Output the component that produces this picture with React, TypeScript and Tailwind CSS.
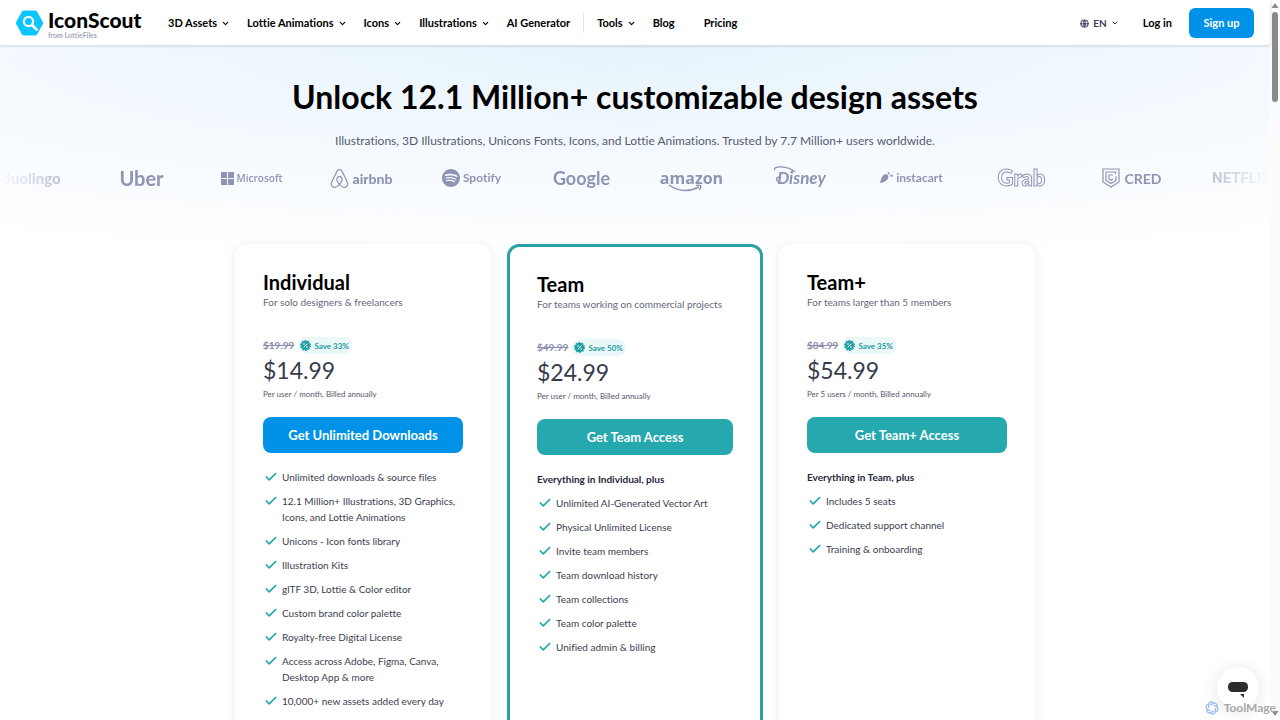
import type { ReactNode } from "react";
import { Check, ChevronDown } from "lucide-react";
import { FaGlobe } from "react-icons/fa";
import { RiOpenaiLine } from "react-icons/ri";
import { SiAirbnb, SiSpotify } from "react-icons/si";

interface NavItem {
  label: string;
  menu?: boolean;
}

interface Plan {
  name: string;
  tagline: string;
  oldPrice: string;
  save: string;
  price: string;
  billing: string;
  cta: string;
  intro?: string;
  features: string[];
  featured?: boolean;
  primary?: boolean;
}

const productNav: NavItem[] = [
  { label: "3D Assets", menu: true },
  { label: "Lottie Animations", menu: true },
  { label: "Icons", menu: true },
  { label: "Illustrations", menu: true },
  { label: "AI Generator" },
];

const plans: Plan[] = [
  {
    name: "Individual",
    tagline: "For solo designers & freelancers",
    oldPrice: "$19.99",
    save: "Save 33%",
    price: "$14.99",
    billing: "Per user / month, Billed annually",
    cta: "Get Unlimited Downloads",
    primary: true,
    features: [
      "Unlimited downloads & source files",
      "12.1 Million+ Illustrations, 3D Graphics, Icons, and Lottie Animations",
      "Unicons - Icon fonts library",
      "Illustration Kits",
      "glTF 3D, Lottie & Color editor",
      "Custom brand color palette",
      "Royalty-free Digital License",
      "Access across Adobe, Figma, Canva, Desktop App & more",
      "10,000+ new assets added every day",
    ],
  },
  {
    name: "Team",
    tagline: "For teams working on commercial projects",
    oldPrice: "$49.99",
    save: "Save 50%",
    price: "$24.99",
    billing: "Per user / month, Billed annually",
    cta: "Get Team Access",
    intro: "Everything in Individual, plus",
    featured: true,
    features: [
      "Unlimited AI-Generated Vector Art",
      "Physical Unlimited License",
      "Invite team members",
      "Team download history",
      "Team collections",
      "Team color palette",
      "Unified admin & billing",
    ],
  },
  {
    name: "Team+",
    tagline: "For teams larger than 5 members",
    oldPrice: "$84.99",
    save: "Save 35%",
    price: "$54.99",
    billing: "Per 5 users / month, Billed annually",
    cta: "Get Team+ Access",
    intro: "Everything in Team, plus",
    features: ["Includes 5 seats", "Dedicated support channel", "Training & onboarding"],
  },
];

function NavLink({ label, menu }: NavItem) {
  if (menu) {
    return (
      <button type="button" className="flex items-center gap-1">
        {label}
        <ChevronDown size={9} strokeWidth={3} />
      </button>
    );
  }
  return <a href="#">{label}</a>;
}

function Logo() {
  return (
    <a href="#" className="flex w-38 items-center gap-1">
      <svg width="28" height="28" viewBox="0 0 28 28" aria-hidden="true">
        <path
          d="M8 4h11L24.500 14 19 24H8L2.500 14z"
          fill="#0bc5ff"
          stroke="#0bc5ff"
          strokeWidth="5"
          strokeLinejoin="round"
        />
        <circle cx="12.500" cy="12.500" r="4.600" fill="none" stroke="#fff" strokeWidth="2.200" />
        <path d="M16 16l4.500 4.500" stroke="#fff" strokeWidth="2.600" strokeLinecap="round" />
      </svg>
      <span className="flex flex-col">
        <span className="text-[21px] leading-6 font-black">IconScout</span>
        <span className="text-[7px] leading-[6px] text-[#a3a6b8]">from LottieFiles</span>
      </span>
    </a>
  );
}

function Header() {
  return (
    <header className="relative z-10 flex h-[45px] items-center bg-white px-4 pt-px text-[11px] font-bold shadow-[0_1px_3px_rgba(40,60,80,0.2)]">
      <Logo />
      <nav className="flex items-center gap-[17px]">
        {productNav.map((item) => (
          <NavLink key={item.label} {...item} />
        ))}
        <span className="-mx-1 h-5 w-px bg-gray-200" />
        <NavLink label="Tools" menu />
        <NavLink label="Blog" />
        <span className="ml-3">
          <NavLink label="Pricing" />
        </span>
      </nav>
      <div className="ml-auto flex items-center">
        <button type="button" className="flex items-center gap-1 text-[10px] text-[#3b3e55]">
          <FaGlobe size={9} />
          EN
          <ChevronDown size={8} strokeWidth={3} />
        </button>
        <a href="#" className="ml-6">
          Log in
        </a>
        <button type="button" className="ml-[17px] h-[30px] w-[65px] rounded-md bg-[#0092e8] text-white">
          Sign up
        </button>
      </div>
    </header>
  );
}

function Brand({ children }: { children: ReactNode }) {
  return (
    <li className="flex h-7 w-[110px] shrink-0 items-center justify-center gap-[3px] whitespace-nowrap">
      {children}
    </li>
  );
}

function Brands() {
  return (
    <ul className="mt-[13px] flex justify-center overflow-hidden pl-[3px] text-[#8f93b4] [mask-image:linear-gradient(to_right,transparent,black_110px,black_calc(100%_-_110px),transparent)]">
      <Brand>
        <span className="text-[15px] font-black">duolingo</span>
      </Brand>
      <Brand>
        <span className="text-[20px] leading-7 font-bold">Uber</span>
      </Brand>
      <Brand>
        <svg width="13" height="13" viewBox="0 0 13 13" fill="currentColor" aria-hidden="true">
          <path d="M0 0h6v6H0zM7 0h6v6H7zM0 7h6v6H0zM7 7h6v6H7z" />
        </svg>
        <span className="font-['Open_Sans',sans-serif] text-[10px] font-semibold">Microsoft</span>
      </Brand>
      <Brand>
        <SiAirbnb size={19} />
        <span className="text-[14px] font-black">airbnb</span>
      </Brand>
      <Brand>
        <SiSpotify size={18} />
        <span className="text-[12px] font-bold">Spotify</span>
      </Brand>
      <Brand>
        <span className="text-[18px] font-bold">Google</span>
      </Brand>
      <Brand>
        <span className="relative font-['Open_Sans',sans-serif] text-[16px] leading-5 font-bold">
          amazon
          <svg
            className="absolute top-4 left-2"
            width="36"
            height="8"
            viewBox="0 0 36 8"
            fill="none"
            stroke="currentColor"
            strokeWidth="1.500"
            aria-hidden="true"
          >
            <path d="M1 1c9 6.500 20 7 30 2M28 1.500c5-1 6-.5 3.500 4.500" />
          </svg>
        </span>
      </Brand>
      <Brand>
        <span className="relative text-[17px] font-bold italic">
          <svg
            className="absolute top-0 -left-1"
            width="28"
            height="20"
            viewBox="0 0 28 20"
            fill="none"
            stroke="currentColor"
            strokeWidth="1.300"
            aria-hidden="true"
          >
            <path d="M2 5C-1 1 14 0 22 7M8 12c-6 0-6 4 0 6" />
          </svg>
          Disney
        </span>
      </Brand>
      <Brand>
        <svg width="13" height="12" viewBox="0 0 13 12" fill="currentColor" aria-hidden="true">
          <path d="M0 11C1 6 3 2 6 2c3 1 3 4 1 6-2 2-5 3-7 3zM8 0c2 0 2 2 1 3-1-1-2-2-1-3zM10 4c1-2 3-1 3 0-1 1-2 1-3 0z" />
        </svg>
        <span className="text-[12px] font-bold">instacart</span>
      </Brand>
      <Brand>
        <span className="text-[22px] leading-7 font-black text-transparent [-webkit-text-stroke:1px_#8f93b4]">
          Grab
        </span>
      </Brand>
      <Brand>
        <svg
          width="18"
          height="20"
          viewBox="0 0 18 20"
          fill="none"
          stroke="currentColor"
          strokeWidth="1.200"
          aria-hidden="true"
        >
          <path d="M1 1h16v13l-8 5-8-5zM13.500 6V4H4v8.500l5 3 5-3V8.500M11 7H7v4l2 1.200 2-1.200" />
        </svg>
        <span className="ml-0.5 text-[14px] font-bold">CRED</span>
      </Brand>
      <Brand>
        <span className="font-['Roboto',sans-serif] text-[15px] font-bold">NETFLIX</span>
      </Brand>
    </ul>
  );
}

function SaveBadge({ label }: { label: string }) {
  return (
    <span className="flex h-[17px] items-center gap-[3px] rounded-full bg-[#eaf8f9] px-0.5 pr-[3px] text-[8px] font-bold text-[#24989d]">
      <svg width="11" height="11" viewBox="0 0 22 22" aria-hidden="true">
        <circle cx="11" cy="11" r="9.500" fill="#21a0a5" />
        <circle
          cx="11"
          cy="11"
          r="9.500"
          fill="none"
          stroke="#21a0a5"
          strokeWidth="3"
          strokeDasharray="3 3"
        />
        <path d="M8 14l6-6" stroke="#fff" strokeWidth="2" strokeLinecap="round" />
        <circle cx="8" cy="8" r="1.600" fill="#fff" />
        <circle cx="14" cy="14" r="1.600" fill="#fff" />
      </svg>
      {label}
    </span>
  );
}

function PlanCard({ plan }: { plan: Plan }) {
  return (
    <article
      className={
        plan.featured
          ? "rounded-xl border-3 border-[#2ba1a6] bg-white p-[27px] pt-[25px]"
          : "rounded-xl bg-white p-7 pt-[26px] shadow-[0_1px_10px_rgba(40,60,80,0.09)]"
      }
    >
      <h2 className="text-[20px] leading-6 font-bold text-black">{plan.name}</h2>
      <p className="text-[10px] leading-4 whitespace-nowrap text-[#65687c]">{plan.tagline}</p>
      <div className="mt-[27px] flex items-center gap-1">
        <s className="text-[10px] font-bold text-[#8a8dac]">{plan.oldPrice}</s>
        <SaveBadge label={plan.save} />
      </div>
      <p className="text-[23px] leading-8 text-[#373a4b]">{plan.price}</p>
      <p className="text-[8px] leading-4 text-[#55586b]">{plan.billing}</p>
      <button
        type="button"
        className={`mt-[15px] h-9 w-full rounded-lg pt-px text-[13px] font-bold text-white ${
          plan.primary ? "bg-[#0092e8]" : "bg-[#25a8ae]"
        }`}
      >
        {plan.cta}
      </button>
      {plan.intro && (
        <p className="mt-4 -mb-2 text-[10px] leading-4 font-bold text-[#26283a]">{plan.intro}</p>
      )}
      <ul className="mt-4 flex flex-col gap-2 text-[10px] leading-4 text-[#3b3e50]">
        {plan.features.map((feature) => (
          <li key={feature} className="flex items-start gap-1 pl-px">
            <Check size={14} strokeWidth={3} className="mt-px shrink-0 text-[#25a8ae]" />
            {feature}
          </li>
        ))}
      </ul>
    </article>
  );
}

function ScrollBar() {
  return (
    <div className="flex w-2.5 shrink-0 flex-col items-center bg-[#fcfcfc] py-[3px] text-[#8b8b8b]">
      <svg width="8" height="6" viewBox="0 0 8 6" fill="currentColor" aria-hidden="true">
        <path d="M4 0l3.500 5h-7z" />
      </svg>
      <span className="mt-[3px] h-[90px] w-1.5 rounded-full bg-[#8b8b8b]" />
      <svg className="mt-auto" width="8" height="6" viewBox="0 0 8 6" fill="currentColor" aria-hidden="true">
        <path d="M4 5L.5 0h7z" />
      </svg>
    </div>
  );
}

function ChatButton() {
  return (
    <button
      type="button"
      aria-label="Open chat"
      className="absolute right-[21px] bottom-[11px] flex size-[42px] items-center justify-center rounded-full bg-white pt-1 shadow-[0_2px_16px_rgba(40,60,80,0.14)]"
    >
      <svg width="20" height="17" viewBox="0 0 20 17" fill="#2d2d2d" aria-hidden="true">
        <rect width="20" height="10" rx="4.500" />
        <path d="M12 12h4v4z" />
      </svg>
    </button>
  );
}

export default function App() {
  return (
    <div className="relative flex h-screen overflow-hidden bg-white font-['Lato','Open_Sans',sans-serif] text-black [font-variant-ligatures:none]">
      <div className="min-w-0 flex-1">
        <Header />
        <main className="bg-[radial-gradient(ellipse_100%_220px_at_50%_0,#e6f3fb,#f5faff_55%,#ffffff)]">
          <section className="pt-8 text-center">
            <h1 className="text-[32px] leading-10 font-bold">
              Unlock 12.1 Million+ customizable design assets
            </h1>
            <p className="mt-[14px] text-[12px] leading-5 text-[#565a70]">
              Illustrations, 3D Illustrations, Unicons Fonts, Icons, and Lottie Animations. Trusted by
              7.7 Million+ users worldwide.
            </p>
            <Brands />
          </section>
          <section className="mx-auto mt-[52px] grid max-w-[800px] grid-cols-3 gap-4">
            {plans.map((plan) => (
              <PlanCard key={plan.name} plan={plan} />
            ))}
          </section>
        </main>
      </div>
      <ScrollBar />
      <ChatButton />
      <div className="absolute right-1 bottom-1 flex items-center gap-1 text-xs font-bold text-[#a9a9a9]">
        <RiOpenaiLine size={16} className="text-[#9dbcf2]" />
        ToolMage
      </div>
    </div>
  );
}
